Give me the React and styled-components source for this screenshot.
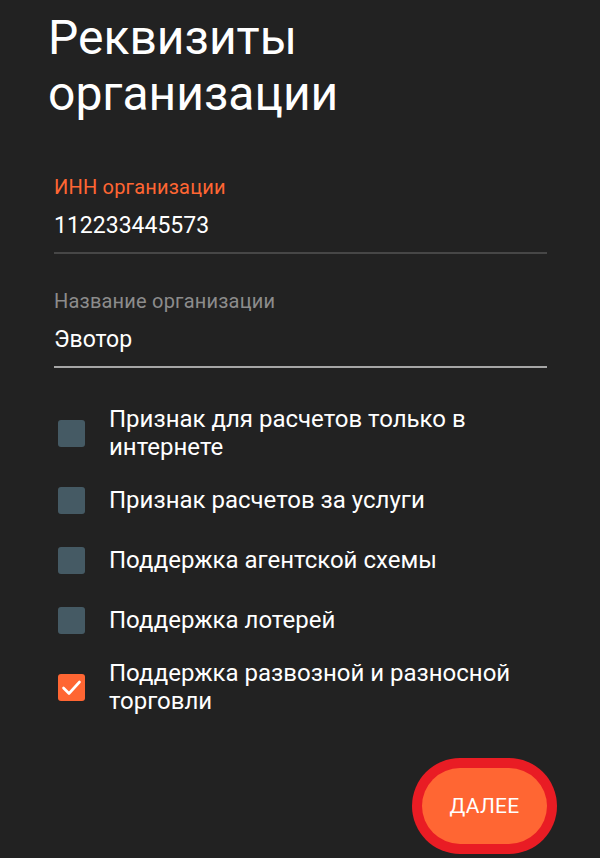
import { createGlobalStyle, styled } from 'styled-components'

const GlobalStyle = createGlobalStyle`
  html, body {
    margin: 0;
    padding: 0;
    background: #222222;
  }
  body {
    font-family: Roboto, 'Noto Sans', 'Liberation Sans', sans-serif;
    color: #ffffff;
  }
`

const Screen = styled.div`
  width: 600px;
  height: 858px;
  overflow: hidden;
  background: #222222;
  display: flex;
  flex-direction: column;
`

const Title = styled.h1`
  margin: 10px 0 0;
  padding-left: 48px;
  font-size: 48px;
  line-height: 56px;
  font-weight: 400;
  color: #ffffff;
`

const Form = styled.div`
  padding: 0 53px 0 54px;
  display: flex;
  flex-direction: column;
`

const Field = styled.div`
  display: flex;
  flex-direction: column;
  gap: 11px;
  margin-top: ${p => p.$top}px;
`

const Label = styled.div`
  font-size: 20px;
  line-height: 24px;
  letter-spacing: 0.2px;
  color: ${p => (p.$active ? '#ff6633' : '#8c8c8c')};
`

const Value = styled.div`
  font-size: 23px;
  line-height: 32px;
  color: #ffffff;
  padding-bottom: 10px;
  border-bottom: 2px solid ${p => (p.$active ? '#474747' : '#a6a6a6')};
`

const Options = styled.div`
  display: flex;
  flex-direction: column;
  gap: 18px;
  margin-top: 37px;
  padding-left: 4px;
`

const Option = styled.div`
  display: flex;
  align-items: center;
  gap: 24px;
  min-height: 42px;
`

const Box = styled.div`
  flex: none;
  width: 27px;
  height: 27px;
  border-radius: 3px;
  background: ${p => (p.$checked ? '#ff6633' : '#455a64')};
  display: flex;
  align-items: center;
  justify-content: center;
`

const OptionText = styled.div`
  font-size: 24px;
  line-height: 28px;
  color: #ffffff;
`

const Footer = styled.div`
  display: flex;
  justify-content: flex-end;
  margin-top: 53px;
`

const NextButton = styled.button`
  width: 125px;
  height: 76px;
  border: none;
  border-radius: 38px;
  background: #ff6633;
  color: #ffffff;
  font-family: Roboto, 'Noto Sans', sans-serif;
  font-size: 21px;
  letter-spacing: 0.3px;
  box-shadow: 0 0 0 10px #e91c24;
  cursor: pointer;
`

const options = [
  { text: 'Признак для расчетов только в интернете', checked: false },
  { text: 'Признак расчетов за услуги', checked: false },
  { text: 'Поддержка агентской схемы', checked: false },
  { text: 'Поддержка лотерей', checked: false },
  { text: 'Поддержка развозной и разносной торговли', checked: true },
]

const Check = () => (
  <svg width='27' height='27' viewBox='0 0 27 27'>
    <polyline points='5.5,14 11,19.5 21.5,8' fill='none' stroke='#fff' strokeWidth='2.6' strokeLinecap='round' strokeLinejoin='round' />
  </svg>
)

const App = () => {
  return (
    <Screen>
      <GlobalStyle />
      <Title>
        Реквизиты
        <br />
        организации
      </Title>
      <Form>
        <Field $top={53}>
          <Label $active>ИНН организации</Label>
          <Value $active>112233445573</Value>
        </Field>
        <Field $top={35}>
          <Label>Название организации</Label>
          <Value>Эвотор</Value>
        </Field>
        <Options>
          {options.map(o => (
            <Option key={o.text}>
              <Box $checked={o.checked}>{o.checked && <Check />}</Box>
              <OptionText>{o.text}</OptionText>
            </Option>
          ))}
        </Options>
        <Footer>
          <NextButton>ДАЛЕЕ</NextButton>
        </Footer>
      </Form>
    </Screen>
  )
}

export default App
